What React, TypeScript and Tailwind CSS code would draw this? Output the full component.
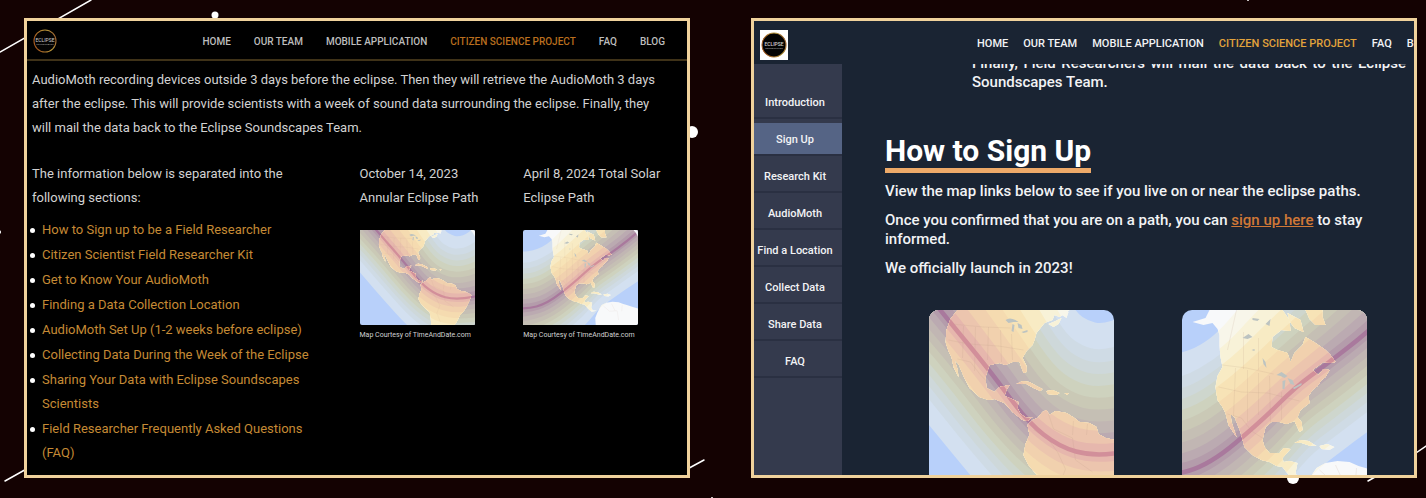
import React, { useId } from "react";

type Point = [number, number];

interface MapData {
  title: string;
  upper: Point[];
  centre: Point[];
  lower: Point[];
  land: string[];
  lakes: string[];
  borders: string;
}

const annular: MapData = {
  title: "Map of the October 2023 annular eclipse path",
  upper: [[110, -120], [140, -60], [155, -20], [168, 3], [180, 11], [193, 14], [212, 8], [235, -15]],
  centre: [[-20, -65], [33, 2], [81, 60], [119, 112], [151, 137], [184, 146], [226, 141], [260, 130]],
  lower: [[-70, 20], [-20, 65], [10, 102], [45, 145], [91, 200], [130, 235], [185, 250], [260, 245]],
  land: [
    "M49 0L42 9L38 20L37 32L40 41L43 47L45 57L50 67L49 59L46 50L50 54L55 66L61 78L71 87L80 90L86 89L96 93L104 102L114 110L119 111L124 107L118 108L112 104L109 98L110 92L101 88L96 86L98 80L101 75L91 77L86 82L78 78L77 67L81 55L91 53L97 55L104 52L111 52L115 63L118 62L118 56L114 48L118 41L124 35L126 30L128 23L136 13L144 10L146 5L151 7L158 3L161 0Z",
    "M140 14L147 11L153 8L150 14L145 17Z M152 4L160 2L158 8Z",
    "M119 115L124 110L129 108L134 102L138 100L141 105L147 101L158 103L166 108L171 112L181 113L188 117L190 124L197 128L207 130L219 137L215 149L209 162L203 172L196 180L192 190L186 200L140 200L139 186L137 173L129 166L120 155L115 145L117 134L121 125Z",
    "M108 74L114 71L121 72L128 76L134 79L132 81L125 78L118 74Z M138 81L144 80L151 83L148 85L139 84Z M156 83L160 83L159 85Z",
  ],
  lakes: [
    "M97 10Q101 7 107 10L110 12L105 12L100 13Z M104 14L106 15L105 22L103 21Z M109 13L113 15L114 19L110 18Z M113 22L119 20L119 22L115 23Z",
  ],
  borders: "M43 14L75 17L102 18M40 30L60 34L90 36L115 40M55 16L54 48M67 17L66 61M80 17L79 50M92 20L93 52M103 24L104 50M49 49L62 52L72 65L79 72M125 120L139 128L149 142L157 159L151 175L158 194M140 104L145 119L164 128L167 150L184 162M165 111L164 125M179 114L178 125",
};

const total: MapData = {
  title: "Map of the April 2024 total solar eclipse path",
  upper: [[-40, 45], [0, 46], [20, 43], [38, 36], [57, 22], [80, -5], [120, -45], [160, -80]],
  centre: [[-30, 165], [5, 167], [48, 155], [101, 110], [134, 77], [164, 55], [209, 20], [235, -5]],
  lower: [[0, 290], [40, 265], [90, 230], [123, 200], [151, 163], [175, 145], [204, 123], [240, 98]],
  land: [
    "M48 0L44 8L31 12L42 15L51 13L56 19L58 25L58 36L59 47L61 57L56 66L54 77L56 90L61 97L64 103L67 115L75 127L70 112L69 104L73 107L79 122L83 137L91 145L100 150L108 152L115 156L121 157L128 166L135 172L145 170L137 169L134 163L136 153L128 151L122 152L121 148L129 139L122 138L118 143L108 143L103 137L101 130L104 117L110 112L118 112L125 114L133 111L138 122L141 120L140 112L136 107L139 100L148 93L147 86L151 80L156 76L160 70L164 67L168 60L162 59L157 65L151 60L162 52L169 53L174 52L169 45L164 40L154 33L144 27L141 35L133 43L129 52L126 43L116 40L110 37L111 27L120 20L129 21L128 10L121 0Z",
    "M144 0L148 9L154 15L164 15L161 7L161 0Z M126 3L139 10L142 22L133 18L128 11Z M99 2L115 4L116 11L103 14Z",
    "M151 164L155 158L164 153L176 151L188 152L197 156L204 158L216 162L226 165L226 200L143 200L142 185L146 174Z",
    "M133 133L139 130L147 131L155 136L149 136L140 133Z M158 136L166 134L173 137L168 140L160 139Z",
  ],
  lakes: [
    "M115 65L120 62L126 66L123 68L119 66Z M121 71L124 70L123 79L121 79Z M126 68L131 70L133 75L129 74Z M131 78L140 73L140 75L133 79Z",
    "M81 28L87 24L91 27L86 29Z M90 40L93 39L93 41Z M101 48L104 52L105 58L102 54Z M91 8L98 9L96 11L91 10Z M104 14L109 9L108 16Z",
  ],
  borders: "M61 55L85 58L112 64M66 40L75 0M82 22L82 59M97 28L97 60M57 77L80 82L106 83L138 91M74 58L72 106M86 60L86 112M97 63L97 105M108 66L109 112M120 82L120 110M66 104L80 108L90 121L101 128M158 160L170 171L185 170L188 190M174 155L181 170M195 158L194 171",
};

const oceanBands: [number, string][] = [
  [1, "#d3e0f0"], [0.8, "#cfdbe5"], [0.7, "#ced8da"], [0.61, "#ced6cd"], [0.52, "#ced2be"],
  [0.43, "#cac9b6"], [0.34, "#c5bfb4"], [0.25, "#c1b6b3"], [0.16, "#bbaab1"], [0.08, "#b49cab"],
];

const landBands: [number, string][] = [
  [1, "#f8f6ea"], [0.85, "#f8f2d8"], [0.7, "#f8ebc4"], [0.55, "#f7e3b6"],
  [0.42, "#f5dbb0"], [0.3, "#f1d1ae"], [0.18, "#ecc5ae"], [0.08, "#e6b7ad"],
];

function smooth(points: Point[]): string {
  const parts = points.slice(1, -1).map((p, i) => {
    const next = points[i + 2];
    const last = i === points.length - 3;
    const end = last ? next : [(p[0] + next[0]) / 2, (p[1] + next[1]) / 2];
    return `Q${p[0]} ${p[1]} ${end[0]} ${end[1]}`;
  });
  return `${points[0][0]} ${points[0][1]}${parts.join("")}`;
}

function mix(from: Point[], to: Point[], t: number): Point[] {
  return from.map((p, i) => [p[0] + (to[i][0] - p[0]) * t, p[1] + (to[i][1] - p[1]) * t]);
}

function bandPath(map: MapData, t: number): string {
  const top = mix(map.centre, map.upper, t);
  const bottom = mix(map.centre, map.lower, t).reverse();
  return `M${smooth(top)}L${smooth(bottom)}Z`;
}

function EclipseMap({ map, fit, className }: { map: MapData; fit: string; className: string }) {
  const id = useId();
  return (
    <svg viewBox="0 0 226 200" preserveAspectRatio={fit} className={className} role="img" aria-label={map.title}>
      <defs>
        <clipPath id={id}>
          {map.land.map((d) => <path key={d} d={d} />)}
        </clipPath>
      </defs>
      <rect width="226" height="200" fill="#b8d0fa" />
      {oceanBands.map(([t, fill]) => <path key={t} d={bandPath(map, t)} fill={fill} />)}
      <path d={`M${smooth(map.centre)}`} fill="none" stroke="#a9799d" strokeWidth="4.5" />
      <g clipPath={`url(#${id})`}>
        <rect width="226" height="200" fill="#f8f9fa" />
        {landBands.map(([t, fill]) => <path key={t} d={bandPath(map, t)} fill={fill} />)}
        <path d={map.borders} fill="none" stroke="#b99a86" strokeOpacity="0.2" strokeWidth="0.8" />
        <path d={`M${smooth(map.centre)}`} fill="none" stroke="#d28f9a" strokeWidth="4.5" />
      </g>
      {map.lakes.map((d) => <path key={d} d={d} fill="#bcc3c1" />)}
      <path d="M217 0H226V14Q222 5 217 0Z" fill="#f4f6f8" />
    </svg>
  );
}

function Logo({ boxed }: { boxed?: boolean }) {
  const id = useId();
  return (
    <svg viewBox="0 0 28 28" className={boxed ? "h-[30px] w-7 shrink-0 bg-white" : "h-7 w-7 shrink-0"} role="img" aria-label="Eclipse Soundscapes">
      <defs>
        <linearGradient id={id} x1="0" x2="1" y1="0.3" y2="0">
          <stop offset="0" stopColor="#a35a20" />
          <stop offset="0.6" stopColor="#b99a3c" />
          <stop offset="1" stopColor="#93502c" />
        </linearGradient>
      </defs>
      <circle cx="14" cy="14" r={boxed ? 12 : 11} fill="#030303" stroke={`url(#${id})`} strokeWidth="1.1" />
      <text x="14" y="15" textAnchor="middle" fontFamily="Roboto, sans-serif" fontSize="5" fill="#d0d0d0">ECLIPSE</text>
      <text x="14" y="18" textAnchor="middle" fontFamily="Roboto, sans-serif" fontSize="2.5" fill="#a0a0a0">SOUNDSCAPES</text>
    </svg>
  );
}

const navItems = ["HOME", "OUR TEAM", "MOBILE APPLICATION", "CITIZEN SCIENCE PROJECT", "FAQ", "BLOG"];

const sections = [
  "How to Sign up to be a Field Researcher",
  "Citizen Scientist Field Researcher Kit",
  "Get to Know Your AudioMoth",
  "Finding a Data Collection Location",
  "AudioMoth Set Up (1-2 weeks before eclipse)",
  "Collecting Data During the Week of the Eclipse",
  "Sharing Your Data with Eclipse Soundscapes Scientists",
  "Field Researcher Frequently Asked Questions (FAQ)",
];

const sideItems = ["Introduction", "Sign Up", "Research Kit", "AudioMoth", "Find a Location", "Collect Data", "Share Data", "FAQ"];

function PathColumn({ map, children }: { map: MapData; children: React.ReactNode }) {
  return (
    <div>
      <p>{children}</p>
      <EclipseMap map={map} fit="none" className="mt-5 h-[95px] w-[115px] rounded-[2px]" />
      <p className="mt-1 text-[7px] leading-3">Map Courtesy of TimeAndDate.com</p>
    </div>
  );
}

function OldSite() {
  return (
    <section className="min-w-0 flex-1 overflow-hidden border-3 border-[#f0d29c] bg-black font-[Roboto,sans-serif] text-[#d2d2d2]">
      <header className="flex h-10 items-center justify-between border-b-2 border-[#3f3218] pt-0.5 pr-[22px] pl-1">
        <Logo />
        <nav className="flex gap-[23px] text-[10px] font-medium whitespace-nowrap text-[#bdbdbd]">
          {navItems.map((item) => (
            <a key={item} href="#" className={item.startsWith("CITIZEN") ? "text-[#b96e1e]" : ""}>{item}</a>
          ))}
        </nav>
      </header>
      <div className="pt-[7px] pl-[5px] text-[13px] leading-6">
        <p className="whitespace-nowrap">
          AudioMoth recording devices outside 3 days before the eclipse. Then they will retrieve the AudioMoth 3 days<br />
          after the eclipse. This will provide scientists with a week of sound data surrounding the eclipse. Finally, they<br />
          will mail the data back to the Eclipse Soundscapes Team.
        </p>
        <div className="mt-[22px] grid grid-cols-[2fr_1fr_1fr]">
          <div>
            <p>The information below is separated into the<br />following sections:</p>
            <ul className="mt-2 flex flex-col gap-px text-[#c58a35]">
              {sections.map((s) => (
                <li key={s} className="relative pr-10 pl-2.5">
                  <span className="absolute top-2.5 -left-0.5 size-[5px] rounded-full bg-white" />
                  <a href="#">{s}</a>
                </li>
              ))}
            </ul>
          </div>
          <PathColumn map={annular}>October 14, 2023<br />Annular Eclipse Path</PathColumn>
          <PathColumn map={total}>April 8, 2024 Total Solar<br />Eclipse Path</PathColumn>
        </div>
      </div>
    </section>
  );
}

function NewSite() {
  return (
    <section className="flex min-w-0 flex-1 flex-col overflow-hidden border-3 border-[#f0d29c] bg-[#1a2433] font-[Roboto,sans-serif] font-medium text-[#f2f3f5]">
      <header className="z-10 flex h-[43px] shrink-0 items-center bg-[#1a2433] pt-1 pl-1.5">
        <Logo boxed />
        <nav className="ml-[189px] flex gap-[15px] text-[11px] whitespace-nowrap">
          {navItems.map((item) => (
            <a key={item} href="#" className={item.startsWith("CITIZEN") ? "text-[#e2a33c]" : ""}>{item}</a>
          ))}
        </nav>
      </header>
      <div className="flex min-h-0 flex-1">
        <aside className="w-[88px] shrink-0 bg-[#343a4d] pt-[18px]">
          <ul>
            {sideItems.map((item) => (
              <li key={item} className="border-b-2 border-[#2a3042] pt-1">
                <button type="button" className={item === "Sign Up" ? "h-[31px] w-full bg-[#556485] pt-1 pr-1.5 text-[11px] whitespace-nowrap" : "h-[31px] w-full pt-1 pr-1.5 text-[11px] whitespace-nowrap"}>{item}</button>
              </li>
            ))}
          </ul>
        </aside>
        <div className="-mt-2.5 min-w-0 flex-1 pl-[43px] text-[15px] leading-[19px]">
          <p className="pr-2 pl-[87px] text-justify">
            Finally, Field Researchers will mail the data back to the Eclipse Soundscapes Team.
          </p>
          <h2 className="mt-[41px] w-fit border-b-5 border-[#eda968] text-[30px] leading-[35px] font-bold text-white">How to Sign Up</h2>
          <div className="mt-[9px] flex flex-col gap-2.5">
            <p>View the map links below to see if you live on or near the eclipse paths.</p>
            <p>
              Once you confirmed that you are on a path, you can{" "}
              <a href="#" className="text-[#d07837] underline">sign up here</a> to stay<br />informed.
            </p>
            <p>We officially launch in 2023!</p>
          </div>
          <div className="mt-8 flex gap-[68px] pl-11">
            <EclipseMap map={annular} fit="xMidYMid slice" className="h-[200px] w-[185px] shrink-0 rounded-[10px]" />
            <EclipseMap map={total} fit="xMidYMid slice" className="h-[200px] w-[185px] shrink-0 rounded-[10px]" />
          </div>
        </div>
      </div>
    </section>
  );
}

export default function App() {
  return (
    <main className="relative isolate flex h-screen gap-[61px] overflow-hidden bg-[#140202] pt-[18px] pr-[9px] pb-5 pl-6">
      <svg viewBox="0 0 1426 498" preserveAspectRatio="none" className="absolute inset-0 -z-10 h-full w-full" aria-hidden="true">
        <g stroke="#fff" strokeWidth="1.5" strokeLinecap="round">
          <path d="M0 52L91 0M5 481L30 467M680 473L704 460M1368 481L1382 473M1410 457L1426 446" />
        </g>
        <g fill="#fff">
          <circle cx="215" cy="15" r="3.5" />
          <circle cx="692" cy="132" r="6" />
          <circle cx="1293" cy="478" r="6" />
          <circle cx="-1" cy="232" r="2" />
          <circle cx="712" cy="498" r="1" />
          <circle cx="1248" cy="0" r="1" />
        </g>
      </svg>
      <OldSite />
      <NewSite />
    </main>
  );
}
